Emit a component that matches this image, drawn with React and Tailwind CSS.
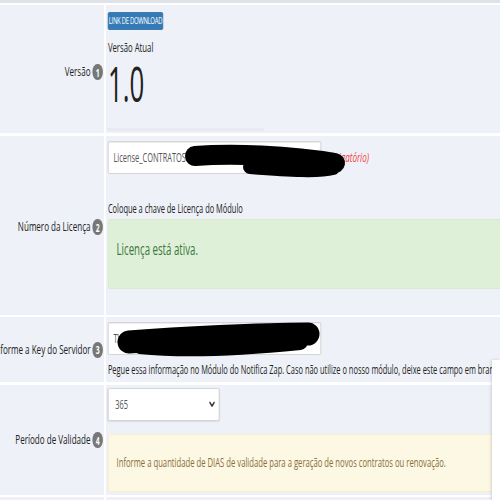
import React from "react";

function Badge({ n }) {
  return (
    <span className="ml-[3px] inline-flex h-[16px] w-[17px] shrink-0 items-center justify-center rounded-full bg-[#777] text-[11px] font-bold leading-none text-white">
      {n}
    </span>
  );
}

function Row({ label, n, labelPad = "", height, children, mb }) {
  return (
    <div className={`flex ${height} ${mb}`}>
      <div
        className={`flex w-[168px] shrink-0 items-center justify-end whitespace-nowrap bg-[#eef1f7] pr-[2px] text-[13px] text-[#222] ${labelPad}`}
      >
        <span>{label}</span>
        <Badge n={n} />
      </div>
      <div className="w-[3px] shrink-0 bg-white" />
      <div className="min-w-0 flex-1 bg-[#eef1f7] pl-[3px]">{children}</div>
    </div>
  );
}

export default function App() {
  return (
    <div className="relative h-[500px] w-[500px] overflow-hidden bg-[#eef1f7] font-['Open_Sans',sans-serif]">
      <div className="w-[807px] origin-top-left scale-x-[0.62] bg-white">
        <div className="h-[3px] bg-[#dfe3e8]" />
        <div className="h-[2px] bg-white" />

        <Row label="Versão" n="1" labelPad="pt-[6px]" height="h-[128px]" mb="mb-[3px]">
          <div className="mt-[7px] flex h-[18px] w-[89px] items-center justify-center whitespace-nowrap rounded-[2px] border border-[#2e6da4] bg-[#337ab7] text-[9.6px] tracking-[-0.5px] text-white">
            LINK DE DOWNLOAD
          </div>
          <div className="mt-[10px] text-[12.5px] leading-[16px] text-[#222]">Versão Atual</div>
          <div className="mt-[2.5px] h-[49px] text-[49px] leading-[49px] text-[#222]">
            <span className="inline-block origin-left scale-x-[0.85]">1.0</span>
          </div>
          <div className="ml-[-1px] mt-[20.5px] h-[3px] w-[252px] bg-[#e7eaf0]" />
        </Row>

        <Row label="Número da Licença" n="2" labelPad="pt-[3px]" height="h-[179px]" mb="mb-[2px]">
          <div className="mt-[5px] flex items-center">
            <div className="flex h-[33px] w-[344px] items-center rounded-[2px] border border-[#ccc] bg-white pl-[8px] text-[12px] text-[#555] shadow-[inset_0_1px_1px_rgba(0,0,0,0.075)]">
              License_CONTRATOS
            </div>
            <span className="ml-[3px] text-[13px] italic text-[#f23c3c]">(Obrigatório)</span>
          </div>
          <div className="mt-[27px] text-[12px] leading-[16px] text-[#222]">
            Coloque a chave de Licença do Módulo
          </div>
          <div className="mt-[2px] h-[70px] w-[700px] rounded-[3px] border border-[#d6e9c6] bg-[#dff0d8] pl-[13px] pt-[20px] text-[15.6px] leading-[18px] text-[#3c763d]">
            Licença está ativa.
          </div>
        </Row>

        <Row label="Informe a Key do Servidor" n="3" height="h-[65px]" mb="mb-[3px]">
          <div className="mt-[5px] flex h-[33px] w-[344px] items-center rounded-[2px] border border-[#ccc] bg-white pl-[8px] text-[12px] text-[#555] shadow-[inset_0_1px_1px_rgba(0,0,0,0.075)]">
            TV
          </div>
          <div className="mt-[7px] whitespace-nowrap text-[12px] leading-[16px] text-[#222]">
            Pegue essa informação no Módulo do Notifica Zap. Caso não utilize o nosso módulo, deixe este campo em branco.
          </div>
        </Row>

        <Row label="Período de Validade" n="4" height="h-[110px]" mb="mb-[2px]">
          <div className="mt-[3px] flex h-[33px] w-[180px] items-center justify-between rounded-[2px] border border-[#ccc] bg-white pl-[11px] pr-[6px] text-[12px] text-[#555] shadow-[0_1px_2px_rgba(0,0,0,0.08)]">
            <span>365</span>
            <svg width="10" height="7" viewBox="0 0 10 7" fill="none">
              <path d="M1.5 1.5 L5 5 L8.5 1.5" stroke="#333" strokeWidth="1.8" strokeLinecap="round" strokeLinejoin="round" />
            </svg>
          </div>
          <div className="mt-[13px] h-[58px] w-[700px] whitespace-nowrap rounded-[3px] border border-[#faebcc] bg-[#fcf8e3] pl-[13px] pt-[20px] text-[12.4px] leading-[16px] text-[#8a6d3b]">
            Informe a quantidade de DIAS de validade para a geração de novos contratos ou renovação.
          </div>
        </Row>

        <div className="flex h-[10px]">
          <div className="w-[168px] shrink-0 bg-[#eef1f7]" />
          <div className="w-[3px] shrink-0 bg-white" />
          <div className="flex-1 bg-[#eef1f7]" />
        </div>
      </div>

      <svg className="pointer-events-none absolute left-0 top-0" width="500" height="500" viewBox="0 0 500 500">
        <path d="M195 156 C 230 153, 290 155, 335 163" stroke="#000" strokeWidth="20" strokeLinecap="round" fill="none" />
        <path d="M250 167 C 290 170, 318 172, 333 168" stroke="#000" strokeWidth="14" strokeLinecap="round" fill="none" />
        <path d="M129 342 C 180 338, 260 334, 308 334" stroke="#000" strokeWidth="23" strokeLinecap="round" fill="none" />
        <path d="M140 346 C 180 350, 240 348, 300 342" stroke="#000" strokeWidth="16" strokeLinecap="round" fill="none" />
      </svg>

      <div className="absolute right-0 top-[360px] h-[140px] w-[8px] bg-white shadow-[-1px_0_3px_rgba(0,0,0,0.15)]" />
    </div>
  );
}
